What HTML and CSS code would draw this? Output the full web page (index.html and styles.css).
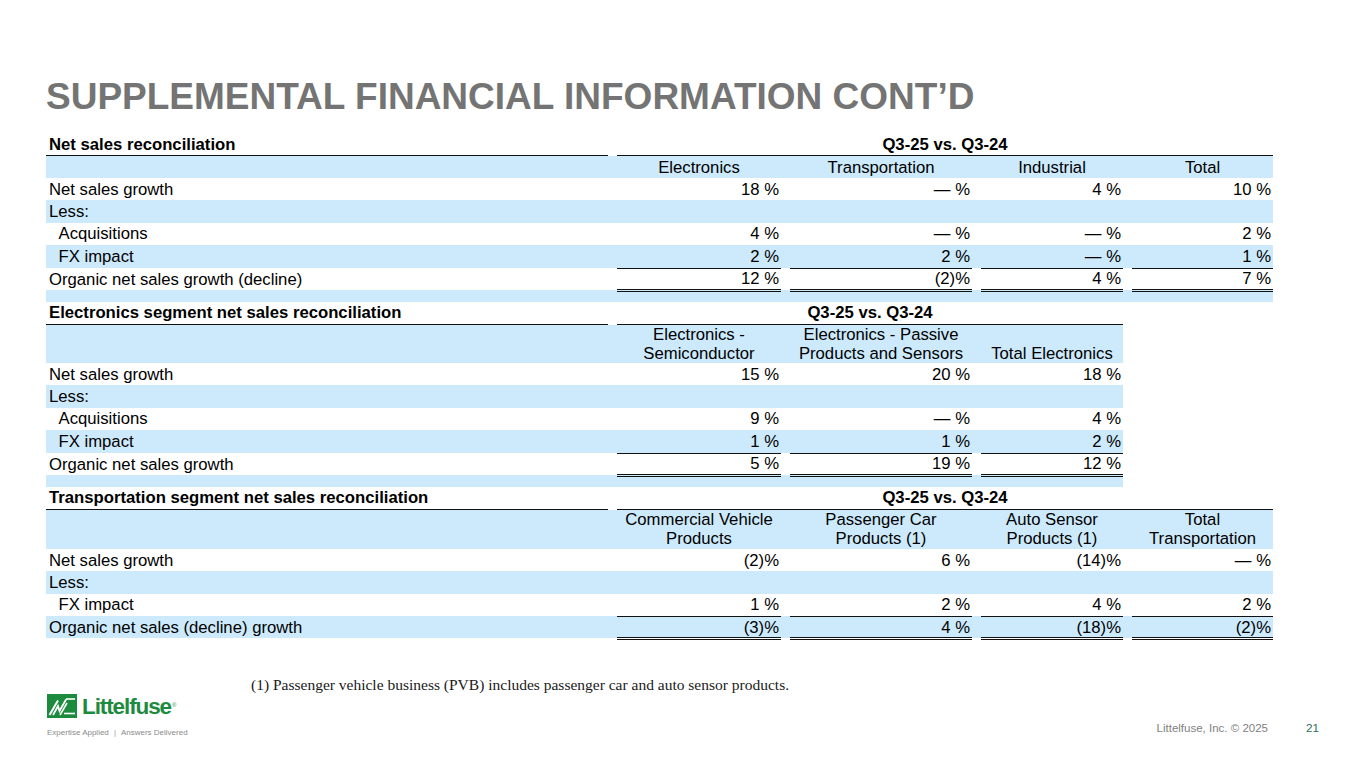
FILE: index.html
```html
<!DOCTYPE html>
<html lang="en">
<head>
<meta charset="utf-8">
<title>Supplemental Financial Information Cont'd</title>
<link rel="stylesheet" href="styles.css">
</head>
<body>
<div class="slide">
  <h1 class="title">SUPPLEMENTAL FINANCIAL INFORMATION CONT’D</h1>

  <section class="rec">
    <div class="row head">
      <div class="c lbl">Net sales reconciliation</div>
      <div class="c period">Q3-25 vs. Q3-24</div>
    </div>
    <div class="row colhead blue">
      <div class="c"></div>
      <div class="c">Electronics</div>
      <div class="c">Transportation</div>
      <div class="c">Industrial</div>
      <div class="c">Total</div>
    </div>
    <div class="row">
      <div class="c lbl">Net sales growth</div>
      <div class="c">18 %</div><div class="c">— %</div><div class="c">4 %</div><div class="c">10 %</div>
    </div>
    <div class="row blue">
      <div class="c lbl">Less:</div>
      <div class="c"></div><div class="c"></div><div class="c"></div><div class="c"></div>
    </div>
    <div class="row">
      <div class="c lbl sub">Acquisitions</div>
      <div class="c">4 %</div><div class="c">— %</div><div class="c">— %</div><div class="c">2 %</div>
    </div>
    <div class="row blue">
      <div class="c lbl sub">FX impact</div>
      <div class="c">2 %</div><div class="c">2 %</div><div class="c">— %</div><div class="c">1 %</div>
    </div>
    <div class="row total">
      <div class="c lbl">Organic net sales growth (decline)</div>
      <div class="c v">12 %</div><div class="c v">(2)%</div><div class="c v">4 %</div><div class="c v">7 %</div>
    </div>
    <div class="spacer blue"></div>
  </section>

  <section class="rec rec--3">
    <div class="row head">
      <div class="c lbl">Electronics segment net sales reconciliation</div>
      <div class="c period">Q3-25 vs. Q3-24</div>
    </div>
    <div class="row colhead tall blue">
      <div class="c"></div>
      <div class="c">Electronics -<br>Semiconductor</div>
      <div class="c">Electronics - Passive<br>Products and Sensors</div>
      <div class="c">Total Electronics</div>
    </div>
    <div class="row">
      <div class="c lbl">Net sales growth</div>
      <div class="c">15 %</div><div class="c">20 %</div><div class="c">18 %</div>
    </div>
    <div class="row blue">
      <div class="c lbl">Less:</div>
      <div class="c"></div><div class="c"></div><div class="c"></div>
    </div>
    <div class="row">
      <div class="c lbl sub">Acquisitions</div>
      <div class="c">9 %</div><div class="c">— %</div><div class="c">4 %</div>
    </div>
    <div class="row blue">
      <div class="c lbl sub">FX impact</div>
      <div class="c">1 %</div><div class="c">1 %</div><div class="c">2 %</div>
    </div>
    <div class="row total">
      <div class="c lbl">Organic net sales growth</div>
      <div class="c v">5 %</div><div class="c v">19 %</div><div class="c v">12 %</div>
    </div>
    <div class="spacer blue"></div>
  </section>

  <section class="rec">
    <div class="row head">
      <div class="c lbl">Transportation segment net sales reconciliation</div>
      <div class="c period">Q3-25 vs. Q3-24</div>
    </div>
    <div class="row colhead tall taller blue">
      <div class="c"></div>
      <div class="c">Commercial Vehicle<br>Products</div>
      <div class="c">Passenger Car<br>Products (1)</div>
      <div class="c">Auto Sensor<br>Products (1)</div>
      <div class="c">Total<br>Transportation</div>
    </div>
    <div class="row">
      <div class="c lbl">Net sales growth</div>
      <div class="c">(2)%</div><div class="c">6 %</div><div class="c">(14)%</div><div class="c">— %</div>
    </div>
    <div class="row blue">
      <div class="c lbl">Less:</div>
      <div class="c"></div><div class="c"></div><div class="c"></div><div class="c"></div>
    </div>
    <div class="row">
      <div class="c lbl sub">FX impact</div>
      <div class="c">1 %</div><div class="c">2 %</div><div class="c">4 %</div><div class="c">2 %</div>
    </div>
    <div class="row total blue">
      <div class="c lbl">Organic net sales (decline) growth</div>
      <div class="c v">(3)%</div><div class="c v">4 %</div><div class="c v">(18)%</div><div class="c v">(2)%</div>
    </div>
  </section>

  <p class="footnote">(1) Passenger vehicle business (PVB) includes passenger car and auto sensor products.</p>

  <footer class="footer">
    <div class="logo">
      <div class="logo-mark">
        <svg class="logo-icon" width="30" height="24" viewBox="0 0 30 24" aria-hidden="true">
          <rect x="0" y="0" width="30" height="24" fill="#1d8b3e"/>
          <path d="M2.5 21 L11 6.5" stroke="#fff" stroke-width="2" fill="none"/>
          <path d="M6 21 L11 12 L12.5 17 L19 5.5" stroke="#fff" stroke-width="1.8" fill="none" stroke-linejoin="miter"/>
          <path d="M13 21 L20 9" stroke="#fff" stroke-width="1.6" fill="none"/>
          <path d="M17 19.5 H28" stroke="#fff" stroke-width="1.6" fill="none"/>
          <path d="M19 5 H28" stroke="#fff" stroke-width="1.6" fill="none"/>
        </svg>
        <span class="logo-word">Littelfuse<sup class="reg">®</sup></span>
      </div>
      <div class="tagline">Expertise Applied <span class="bar">|</span> Answers Delivered</div>
    </div>
    <div class="footer-right">
      <span class="copy">Littelfuse, Inc. © 2025</span>
      <span class="page">21</span>
    </div>
  </footer>
</div>
</body>
</html>
```

FILE: styles.css
```css
* {
  box-sizing: border-box;
}

html, body {
  margin: 0;
  padding: 0;
  background: #ffffff;
}

body {
  font-family: "Liberation Sans", Arial, sans-serif;
  color: #000;
}

.slide {
  width: 1365px;
  height: 768px;
  padding: 77px 0 0 46px;
  overflow: hidden;
}

.title {
  margin: 0 0 16px 0;
  font-size: 37px;
  line-height: 40px;
  font-weight: bold;
  color: #747474;
  white-space: nowrap;
}

.rec {
  width: 1227px;
  font-size: 16.7px;
}

.rec--3 {
  width: 1077px;
}

.row {
  display: grid;
  grid-template-columns: 562px 164px 182px 142px 141px;
  column-gap: 9px;
  height: 22.4px;
  line-height: 19px;
}

.rec--3 .row {
  grid-template-columns: 562px 164px 182px 142px;
}

.blue {
  background: #cdeafc;
}

.c {
  display: flex;
  align-items: center;
  justify-content: flex-end;
  padding-right: 2px;
  white-space: nowrap;
}

.lbl {
  justify-content: flex-start;
  padding-left: 3px;
  padding-right: 0;
}

.sub {
  padding-left: 12.5px;
}

.row.head {
  height: 23px;
}

.head .c {
  font-weight: bold;
  border-bottom: 1px solid #111;
}

.head .period {
  grid-column: 2 / -1;
  justify-content: center;
  padding-right: 0;
}

.colhead {
  height: 22px;
}

.colhead .c {
  justify-content: center;
  text-align: center;
  padding-right: 0;
}

.colhead.tall {
  height: 38px;
}

.colhead.taller {
  height: 39px;
}

.tall .c {
  align-items: flex-end;
  padding-bottom: 1px;
}

.total .v {
  border-top: 1px solid #111;
  border-bottom: 3px double #111;
  height: calc(100% + 1px);
}

.spacer {
  height: 12px;
}

.footnote {
  margin: 38px 0 0 205px;
  font-family: "Liberation Serif", "Times New Roman", serif;
  font-size: 15.5px;
  line-height: 18px;
  color: #1a1a1a;
}

.footer {
  width: 1273px;
  margin-top: 0;
  display: flex;
  justify-content: space-between;
  align-items: flex-start;
}

.logo {
  display: flex;
  flex-direction: column;
  padding-left: 1px;
}

.logo-mark {
  display: flex;
  align-items: center;
  gap: 5px;
  height: 24px;
}

.logo-icon {
  display: block;
}

.logo-word {
  font-family: "Liberation Sans", Arial, sans-serif;
  font-weight: bold;
  font-size: 22.5px;
  letter-spacing: -1.1px;
  color: #1d8b3e;
  line-height: 24px;
  position: relative;
  top: 1px;
}

.reg {
  font-size: 6px;
  letter-spacing: 0;
  vertical-align: top;
  position: relative;
  top: -2px;
  margin-left: 1px;
  font-weight: normal;
}

.tagline {
  margin-top: 10px;
  font-size: 8px;
  line-height: 10px;
  color: #8a8a8a;
  white-space: nowrap;
}

.bar {
  padding: 0 3px;
  color: #9a9a9a;
}

.footer-right {
  display: flex;
  align-items: baseline;
  gap: 38px;
  margin-top: 27px;
}

.copy {
  font-size: 11.5px;
  color: #7f7f7f;
}

.page {
  font-size: 11.7px;
  color: #2f6f5b;
}
```
